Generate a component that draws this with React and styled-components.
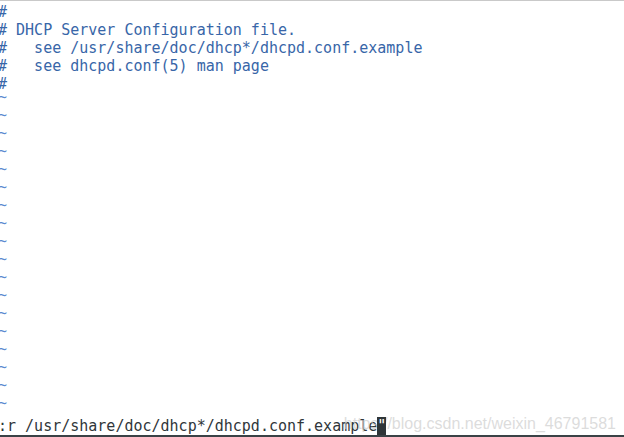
import React from "react";
import styled, { createGlobalStyle } from "styled-components";

const Global = createGlobalStyle`
  html, body { margin: 0; padding: 0; background: #ffffff; }
  body { width: 624px; height: 437px; overflow: hidden; }
`;

const Terminal = styled.div`
  position: relative;
  width: 624px;
  height: 437px;
  box-sizing: border-box;
  border-top: 1px solid #c9c9c9;
  border-bottom: 2px solid #3a4246;
  background: #ffffff;
  display: flex;
  flex-direction: column;
  overflow: hidden;
  font-family: "DejaVu Sans Mono", monospace;
  font-size: 15px;
  line-height: 18px;
`;

const Buffer = styled.div`
  flex: 1;
  display: flex;
  flex-direction: column;
  margin-left: -2px;
  padding-top: 2px;
`;

const Line = styled.div`
  white-space: pre;
  height: 18px;
  color: #3866a8;
`;

const Tilde = styled.div`
  white-space: pre;
  height: 18px;
  color: #5b8ad0;
  transform: translateY(-5px);
`;

const CommandLine = styled.div`
  white-space: pre;
  height: 18px;
  margin-left: -2px;
  color: #30363a;
  display: flex;
`;

const Cursor = styled.span`
  display: inline-block;
  width: 9px;
  height: 18px;
  background: #2f3538;
  color: #ffffff;
  position: relative;
  z-index: 2;
`;

const Watermark = styled.div`
  position: absolute;
  right: 8px;
  bottom: 2px;
  font-family: "Liberation Sans", Arial, sans-serif;
  font-size: 16px;
  line-height: 18px;
  color: rgba(205, 205, 205, 0.7);
  z-index: 1;
  pointer-events: none;
`;

const textLines = [
  "#",
  "# DHCP Server Configuration file.",
  "#   see /usr/share/doc/dhcp*/dhcpd.conf.example",
  "#   see dhcpd.conf(5) man page",
  "#",
];

export default function App() {
  const tildes = Array.from({ length: 18 });
  return (
    <>
      <Global />
      <Terminal>
        <Buffer>
          {textLines.map((l, i) => (
            <Line key={i}>{l}</Line>
          ))}
          {tildes.map((_, i) => (
            <Tilde key={"t" + i}>~</Tilde>
          ))}
        </Buffer>
        <CommandLine>
          <span>:r /usr/share/doc/dhcp*/dhcpd.conf.example</span>
          <Cursor>"</Cursor>
        </CommandLine>
        <Watermark>https://blog.csdn.net/weixin_46791581</Watermark>
      </Terminal>
    </>
  );
}
